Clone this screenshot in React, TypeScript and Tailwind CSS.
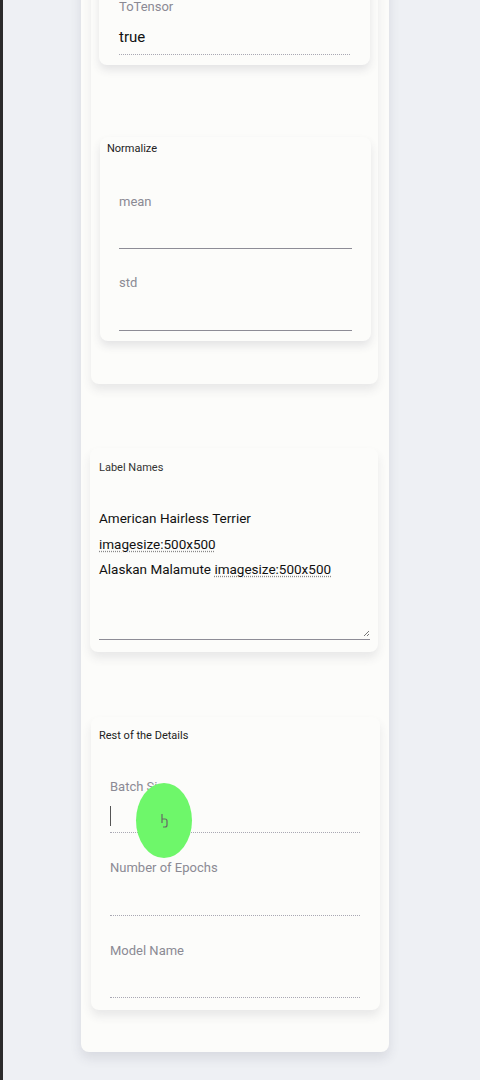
import React from 'react';

const font = { fontFamily: 'Roboto, "Liberation Sans", sans-serif' };

interface FieldProps {
  label: string;
  labelGap: string;
  cursor?: boolean;
  dotted?: boolean;
}

const Field: React.FC<FieldProps> = ({ label, labelGap, cursor, dotted }) => (
  <div>
    <div className="text-[13px] leading-4 text-[#8b8a94]">{label}</div>
    <div
      className={`${labelGap} border-b ${dotted ? 'border-dotted border-[#a9a8b3]' : 'border-[#8d8c96]'} flex items-end`}
    >
      {cursor && <span className="w-px h-[20px] bg-[#555] mb-[6px]" />}
    </div>
  </div>
);

const App: React.FC = () => {
  return (
    <div className="min-h-[1080px] bg-[#eef0f4] border-l-[3px] border-[#2b2b2b] overflow-hidden" style={font}>
      <div className="ml-[78px] w-[308px] -mt-[40px] px-[10px] pb-[42px] rounded-b-lg bg-[#fcfcfa] shadow-[0_6px_12px_rgba(60,60,80,0.12)]">
        {/* transforms */}
        <div className="w-[287px] pt-[8px] px-[8px] pb-[43px] rounded-lg bg-[#fcfcfa] shadow-[0_6px_10px_rgba(60,60,80,0.10)]">
          <div className="w-[271px] pt-[31px] px-[20px] pb-[10px] rounded-lg bg-[#fcfcfa] shadow-[0_5px_8px_rgba(60,60,80,0.12)]">
            <div className="text-[13px] leading-4 text-[#8b8a94]">ToTensor</div>
            <div className="mt-[10px] h-[30px] border-b border-dotted border-[#a9a8b3]">
              <span className="text-[15px] leading-6 text-[#111]">true</span>
            </div>
          </div>

          <div className="mt-[72px] ml-px w-[271px] pt-[5px] pb-[10px] rounded-lg bg-[#fcfcfa] shadow-[0_5px_8px_rgba(60,60,80,0.12)]">
            <div className="pl-[7px] text-[11px] leading-[14px] text-[#222]">Normalize</div>
            <div className="px-[19px]">
              <div className="mt-[38px]">
                <Field label="mean" labelGap="h-[39px]" />
              </div>
              <div className="mt-[26px]">
                <Field label="std" labelGap="h-[40px]" />
              </div>
            </div>
          </div>
        </div>

        {/* label names */}
        <div className="mt-[64px] w-[288px] -ml-px pt-[13px] pl-[9px] pr-[8px] pb-[12px] rounded-lg bg-[#fcfcfa] shadow-[0_6px_10px_rgba(60,60,80,0.10)]">
          <div className="text-[11px] leading-[14px] text-[#333]">Label Names</div>
          <div className="relative mt-[31px] h-[134px] border-b border-[#8d8c96] text-[13.5px] leading-[25.5px] text-[#111]">
            <div>American Hairless Terrier</div>
            <div>
              <span className="underline decoration-dotted decoration-[#888] underline-offset-2">imagesize:500x500</span>
            </div>
            <div>
              Alaskan Malamute{' '}
              <span className="underline decoration-dotted decoration-[#888] underline-offset-2">imagesize:500x500</span>
            </div>
            <svg className="absolute right-0 bottom-[2px]" width="8" height="8" viewBox="0 0 8 8">
              <path d="M7 2L2 7M7 5L5 7" stroke="#777" strokeWidth="1" />
            </svg>
          </div>
        </div>

        {/* rest of details */}
        <div className="mt-[65px] w-[289px] pt-[12px] pb-[12px] rounded-lg bg-[#fcfcfa] shadow-[0_6px_10px_rgba(60,60,80,0.10)]">
          <div className="pl-[8px] text-[11px] leading-[14px] text-[#222]">Rest of the Details</div>
          <div className="pl-[19px] pr-[20px]">
            <div className="mt-[36px]">
              <Field label="Batch Size" labelGap="h-[38px]" cursor dotted />
            </div>
            <div className="mt-[27px]">
              <Field label="Number of Epochs" labelGap="h-[40px]" dotted />
            </div>
            <div className="mt-[27px]">
              <Field label="Model Name" labelGap="h-[39px]" dotted />
            </div>
          </div>
        </div>
      </div>

      {/* click indicator */}
      <div className="absolute left-[136px] top-[783px] w-[56px] h-[75px] rounded-[50%] bg-[#6ef76a] flex items-center justify-center">
        <svg width="10" height="16" viewBox="0 0 10 16">
          <path d="M3 1v9M3 6h3a2 2 0 0 1 2 2v4a2 2 0 0 1-2 2H4" fill="none" stroke="#666" strokeWidth="1.2" />
        </svg>
      </div>
    </div>
  );
};

export default App;
